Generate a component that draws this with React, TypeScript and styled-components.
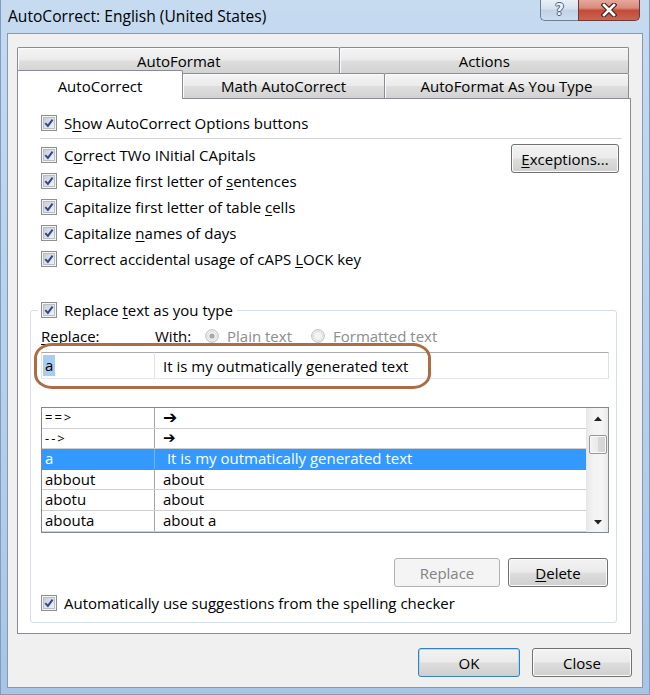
import React from "react";
import styled, { createGlobalStyle } from "styled-components";

const GlobalStyle = createGlobalStyle`
  html, body {
    margin: 0;
    padding: 0;
  }
  body {
    font-family: "Open Sans", "Noto Sans", "DejaVu Sans", sans-serif;
    font-size: 15px;
    color: #000;
    background: #b9d1ea;
  }
  #root {
    width: 650px;
    height: 695px;
  }
  u {
    text-underline-offset: 2px;
  }
`;

const Window = styled.div`
  width: 650px;
  height: 695px;
  box-sizing: border-box;
  display: flex;
  flex-direction: column;
  overflow: hidden;
  background: linear-gradient(
    180deg,
    #c6daf0 0%,
    #bcd3ec 35%,
    #b2cbe8 75%,
    #a9c4e4 100%
  );
  box-shadow: inset 1px 0 0 #7f9dc0, inset -1px 0 0 #7f9dc0,
    inset 0 -1px 0 #7f9dc0;
`;

const TitleBar = styled.div`
  height: 33px;
  flex-shrink: 0;
  display: flex;
  align-items: flex-start;
`;

const Title = styled.div`
  padding: 6px 0 0 8px;
  line-height: 20px;
  font-size: 15.6px;
  color: #000;
`;

const CaptionButtons = styled.div`
  margin-left: auto;
  margin-right: 10px;
  display: flex;
`;

const HelpButton = styled.div`
  width: 38px;
  height: 21px;
  box-sizing: border-box;
  border: 1px solid #6f7f96;
  border-top: none;
  border-right: none;
  border-radius: 0 0 0 5px;
  background: linear-gradient(180deg, #e8eff8 0%, #d5e1ee 45%, #c2d3e7 50%, #cddcee 100%);
  display: flex;
  align-items: center;
  justify-content: center;
  font-family: "DejaVu Sans", sans-serif;
  font-weight: bold;
  font-size: 15px;
  color: #eef3f9;
  text-shadow: 1px 0 0 #4c5f78, -1px 0 0 #4c5f78, 0 1px 0 #4c5f78, 0 -1px 0 #4c5f78;
`;

const CloseButton = styled.div`
  width: 62px;
  height: 21px;
  box-sizing: border-box;
  border: 1px solid #6e3a35;
  border-top: none;
  border-radius: 0 0 5px 0;
  background: linear-gradient(180deg, #e6a89c 0%, #d98a7b 40%, #c44a39 52%, #cc6352 100%);
  display: flex;
  align-items: center;
  justify-content: center;
`;

const Client = styled.div`
  flex: 1;
  margin: 0 7px 7px;
  border: 1px solid #8499b3;
  background: #f0f0f0;
  padding: 13px 11px 0 9px;
  display: flex;
  flex-direction: column;
`;

const TabRow = styled.div`
  display: flex;
  width: 612px;
  height: ${(p) => (p.$front ? 25 : 26)}px;
  align-items: flex-start;
`;

const Tab = styled.div`
  box-sizing: border-box;
  width: ${(p) => p.$w}px;
  height: ${(p) => (p.$active ? 29 : p.$h)}px;
  margin-top: ${(p) => (p.$active ? -3 : 0)}px;
  padding-top: ${(p) => (p.$active ? 2 : 0)}px;
  margin-left: ${(p) => (p.$first ? 0 : -1)}px;
  border: 1px solid #898c95;
  border-bottom: none;
  border-radius: 2px 2px 0 0;
  background: ${(p) =>
    p.$active
      ? "#fff"
      : "linear-gradient(180deg, #f4f4f4 0%, #ebebeb 48%, #dedede 52%, #d2d2d2 100%)"};
  box-shadow: ${(p) => (p.$active ? "none" : "inset 1px 1px 0 #fbfbfb")};
  position: relative;
  z-index: ${(p) => (p.$active ? 2 : 0)};
  display: flex;
  align-items: center;
  justify-content: center;
  font-size: 15px;
`;

const Panel = styled.div`
  width: 614px;
  height: 536px;
  box-sizing: border-box;
  border: 1px solid #898c95;
  background: #fff;
  padding: 0 11px 0 12px;
  display: flex;
  flex-direction: column;
  position: relative;
  z-index: 1;
`;

const CheckRow = styled.div`
  display: flex;
  align-items: center;
  gap: 7px;
  height: 26px;
  padding-left: ${(p) => p.$indent || 0}px;
  margin-top: ${(p) => p.$top || 0}px;
  white-space: nowrap;
`;

const Separator = styled.div`
  height: 1px;
  background: #d3d3d3;
  margin: 2px -3px 0 10px;
`;

const OptionsArea = styled.div`
  display: flex;
  align-items: flex-start;
  margin-top: 3px;
`;

const OptionList = styled.div`
  display: flex;
  flex-direction: column;
`;

const Button = styled.button`
  box-sizing: border-box;
  width: ${(p) => p.$w}px;
  height: 29px;
  flex-shrink: 0;
  padding: 0;
  border-radius: 3px;
  font-family: inherit;
  font-size: 15px;
  color: #000;
  border: 1px solid #707070;
  background: linear-gradient(180deg, #f2f2f2 0%, #ebebeb 48%, #dddddd 52%, #cfcfcf 100%);
  box-shadow: inset 0 0 0 1px #fbfbfb;

  &:disabled {
    border-color: #adb2b5;
    background: #f4f4f4;
    color: #838383;
    box-shadow: none;
  }

  &[data-default="true"] {
    border-color: #3c7fb1;
    box-shadow: inset 0 0 0 1px #a9dcf4;
  }
`;

const ExceptionsButton = styled(Button)`
  margin: 2px 0 0 auto;
`;

const GroupBox = styled.div`
  margin: 38px 2px 0 0;
  border: 1px solid #d5dfe5;
  border-radius: 3px;
  padding: 0 7px 6px 10px;
  display: flex;
  flex-direction: column;
  position: relative;
`;

const Legend = styled(CheckRow)`
  align-self: flex-start;
  margin: -14px 0 0 -3px;
  padding: 0 4px 0 3px;
  background: #fff;
`;

const LabelRow = styled.div`
  display: flex;
  align-items: center;
  height: 22px;
  margin-top: 2px;
  white-space: nowrap;
`;

const FieldLabel = styled.span`
  width: ${(p) => p.$w}px;
  flex-shrink: 0;
`;

const RadioOption = styled.span`
  display: flex;
  align-items: center;
  gap: 8px;
  width: ${(p) => p.$w || "auto"};
  color: #8d8d8d;
`;

const InputRow = styled.div`
  display: flex;
  height: 27px;
  margin-top: 5px;
`;

const TextBox = styled.div`
  box-sizing: border-box;
  height: 27px;
  width: ${(p) => (p.$w ? `${p.$w}px` : "auto")};
  flex: ${(p) => (p.$w ? "none" : 1)};
  margin-left: ${(p) => (p.$w ? 0 : -1)}px;
  border: 1px solid #abadb3;
  border-left-color: #e2e3ea;
  border-right-color: #dbdfe6;
  border-bottom-color: #e3e9ef;
  background: #fff;
  padding-left: ${(p) => p.$pad}px;
  display: flex;
  align-items: center;
  white-space: nowrap;
`;

const Selection = styled.span`
  background: #a9cdf0;
  padding: 1px 2px;
  line-height: 19px;
`;

const Annotation = styled.div`
  position: absolute;
  left: 3px;
  top: 32px;
  width: 397px;
  height: 46px;
  box-sizing: border-box;
  border: 3.5px solid #ab6c46;
  border-radius: 18px / 15px;
  pointer-events: none;
`;

const ListBox = styled.div`
  margin-top: 28px;
  height: 126px;
  box-sizing: border-box;
  border: 1px solid #828790;
  background: #fff;
  display: flex;
`;

const ListRows = styled.div`
  flex: 1;
  display: flex;
  flex-direction: column;
`;

const ListRow = styled.div`
  display: grid;
  grid-template-columns: 113px 1fr;
  height: 20.6px;
  box-sizing: border-box;
  border-bottom: 1px solid ${(p) => (p.$selected ? "#3399ff" : "#cfcfcf")};
  background: ${(p) => (p.$selected ? "#3399ff" : "transparent")};
  color: ${(p) => (p.$selected ? "#fff" : "#000")};
  line-height: 19px;
  white-space: pre;
`;

const KeyCell = styled.div`
  padding-left: 3px;
  border-right: 1px solid ${(p) => (p.$selected ? "#6fb5ff" : "#a5a5a5")};
  letter-spacing: ${(p) => (p.$symbol ? "2px" : "0")};
  font-size: ${(p) => (p.$symbol ? "13px" : "15px")};
`;

const ValueCell = styled.div`
  padding-left: 8px;
  font-family: ${(p) => (p.$symbol ? '"DejaVu Sans", sans-serif' : "inherit")};
  font-size: ${(p) => (p.$heavy ? "17px" : p.$symbol ? "15px" : "15px")};
  line-height: 19px;
`;

const ScrollBar = styled.div`
  width: 22px;
  box-sizing: border-box;
  border-left: 1px solid #e6e6e6;
  background: linear-gradient(90deg, #e9e9e9, #f3f3f3 30%, #f5f5f5 70%, #e9e9e9);
  display: flex;
  flex-direction: column;
  align-items: center;
`;

const ScrollArrow = styled.div`
  height: 20px;
  display: flex;
  align-items: center;
  justify-content: center;
`;

const ScrollThumb = styled.div`
  width: 18px;
  height: 19px;
  margin-top: 7px;
  box-sizing: border-box;
  border: 1px solid #979797;
  border-radius: 2px;
  background: linear-gradient(90deg, #f3f3f3, #e9e9e9 50%, #d9d9d9 51%, #d4d4d4);
  box-shadow: inset 0 0 0 1px #f8f8f8;
`;

const Spacer = styled.div`
  flex: 1;
`;

const ButtonRow = styled.div`
  display: flex;
  justify-content: flex-end;
  gap: 8px;
  margin-top: 25px;
  padding-right: 1px;
`;

const Footer = styled.div`
  display: flex;
  justify-content: flex-end;
  gap: 12px;
  margin: 14px -1px 0 0;
`;

function CheckBox() {
  return (
    <svg width="16" height="16" viewBox="0 0 16 16" style={{ flexShrink: 0 }}>
      <defs>
        <linearGradient id="cbFill" x1="0" y1="0" x2="1" y2="1">
          <stop offset="0" stopColor="#c6ccd3" />
          <stop offset="1" stopColor="#f4f5f7" />
        </linearGradient>
      </defs>
      <rect x="0.5" y="0.5" width="15" height="15" fill="#f4f4f4" stroke="#8e8f8f" />
      <rect x="2.5" y="2.5" width="11" height="11" fill="url(#cbFill)" stroke="#b9bec4" />
      <path d="M4.3 8.1 L6.9 10.9 L11.6 4.6" fill="none" stroke="#33478a" strokeWidth="2" />
    </svg>
  );
}

function Radio({ checked }: { checked?: boolean }) {
  return (
    <svg width="14" height="14" viewBox="0 0 14 14" style={{ flexShrink: 0 }}>
      <circle cx="7" cy="7" r="6.3" fill="#f4f4f4" stroke="#b8b8b8" />
      <circle cx="7" cy="7" r="4.4" fill="none" stroke="#dedede" />
      {checked && <circle cx="7" cy="7" r="2.6" fill="#a8a8a8" />}
    </svg>
  );
}

function Triangle({ up }: { up?: boolean }) {
  return (
    <svg width="8" height="5" viewBox="0 0 8 5">
      <path d={up ? "M0 5 L4 0.5 L8 5 Z" : "M0 0 L4 4.5 L8 0 Z"} fill="#222" />
    </svg>
  );
}

function CloseGlyph() {
  return (
    <svg width="16" height="14" viewBox="0 0 16 14">
      <path d="M3 2 L13 12 M13 2 L3 12" stroke="#4d2622" strokeWidth="5" strokeLinecap="square" />
      <path d="M3 2 L13 12 M13 2 L3 12" stroke="#fff" strokeWidth="2.6" strokeLinecap="square" />
    </svg>
  );
}

const options = [
  <>C<u>o</u>rrect TWo INitial CApitals</>,
  <>Capitalize first letter of <u>s</u>entences</>,
  <>Capitalize first letter of table <u>c</u>ells</>,
  <>Capitalize <u>n</u>ames of days</>,
  <>Correct accidental usage of cAPS <u>L</u>OCK key</>,
];

const entries = [
  { key: "==>", value: "➔", symbol: true, heavy: true },
  { key: "-->", value: "➔", symbol: true },
  { key: "a", value: " It is my outmatically generated text", selected: true },
  { key: "abbout", value: "about" },
  { key: "abotu", value: "about" },
  { key: "abouta", value: "about a" },
];

export default function App() {
  return (
    <>
      <GlobalStyle />
      <Window>
        <TitleBar>
          <Title>AutoCorrect: English (United States)</Title>
          <CaptionButtons>
            <HelpButton>?</HelpButton>
            <CloseButton>
              <CloseGlyph />
            </CloseButton>
          </CaptionButtons>
        </TitleBar>

        <Client>
          <TabRow>
            <Tab $w={324} $h={26} $first>AutoFormat</Tab>
            <Tab $w={290} $h={26}>Actions</Tab>
          </TabRow>
          <TabRow $front>
            <Tab $w={166} $h={25} $first $active>AutoCorrect</Tab>
            <Tab $w={203} $h={25}>Math AutoCorrect</Tab>
            <Tab $w={245} $h={25}>AutoFormat As You Type</Tab>
          </TabRow>

          <Panel>
            <CheckRow $indent={11} $top={11}>
              <CheckBox />
              <span>S<u>h</u>ow AutoCorrect Options buttons</span>
            </CheckRow>
            <Separator />

            <OptionsArea>
              <OptionList>
                {options.map((label, i) => (
                  <CheckRow key={i} $indent={11}>
                    <CheckBox />
                    <span>{label}</span>
                  </CheckRow>
                ))}
              </OptionList>
              <ExceptionsButton $w={108}>
                <u>E</u>xceptions...
              </ExceptionsButton>
            </OptionsArea>

            <GroupBox>
              <Legend>
                <CheckBox />
                <span>Replace <u>t</u>ext as you type</span>
              </Legend>
              <LabelRow>
                <FieldLabel $w={114}>
                  <u>R</u>eplace:
                </FieldLabel>
                <FieldLabel $w={50}>With:</FieldLabel>
                <RadioOption $w="106px">
                  <Radio checked />
                  Plain text
                </RadioOption>
                <RadioOption>
                  <Radio />
                  Formatted text
                </RadioOption>
              </LabelRow>
              <InputRow>
                <TextBox $w={114} $pad={1}>
                  <Selection>a</Selection>
                </TextBox>
                <TextBox $pad={8}>It is my outmatically generated text</TextBox>
              </InputRow>
              <Annotation />

              <ListBox>
                <ListRows>
                  {entries.map((e) => (
                    <ListRow key={e.key} $selected={e.selected}>
                      <KeyCell $selected={e.selected} $symbol={e.symbol}>
                        {e.key}
                      </KeyCell>
                      <ValueCell $symbol={e.symbol} $heavy={e.heavy}>
                        {e.value}
                      </ValueCell>
                    </ListRow>
                  ))}
                </ListRows>
                <ScrollBar>
                  <ScrollArrow>
                    <Triangle up />
                  </ScrollArrow>
                  <ScrollThumb />
                  <Spacer />
                  <ScrollArrow>
                    <Triangle />
                  </ScrollArrow>
                </ScrollBar>
              </ListBox>

              <ButtonRow>
                <Button $w={106} disabled>
                  Replace
                </Button>
                <Button $w={100}>
                  <u>D</u>elete
                </Button>
              </ButtonRow>

              <CheckRow $top={3}>
                <CheckBox />
                <span>Automatically use sug<u>g</u>estions from the spelling checker</span>
              </CheckRow>
            </GroupBox>
          </Panel>

          <Footer>
            <Button $w={102} data-default="true">OK</Button>
            <Button $w={100}>Close</Button>
          </Footer>
        </Client>
      </Window>
    </>
  );
}
